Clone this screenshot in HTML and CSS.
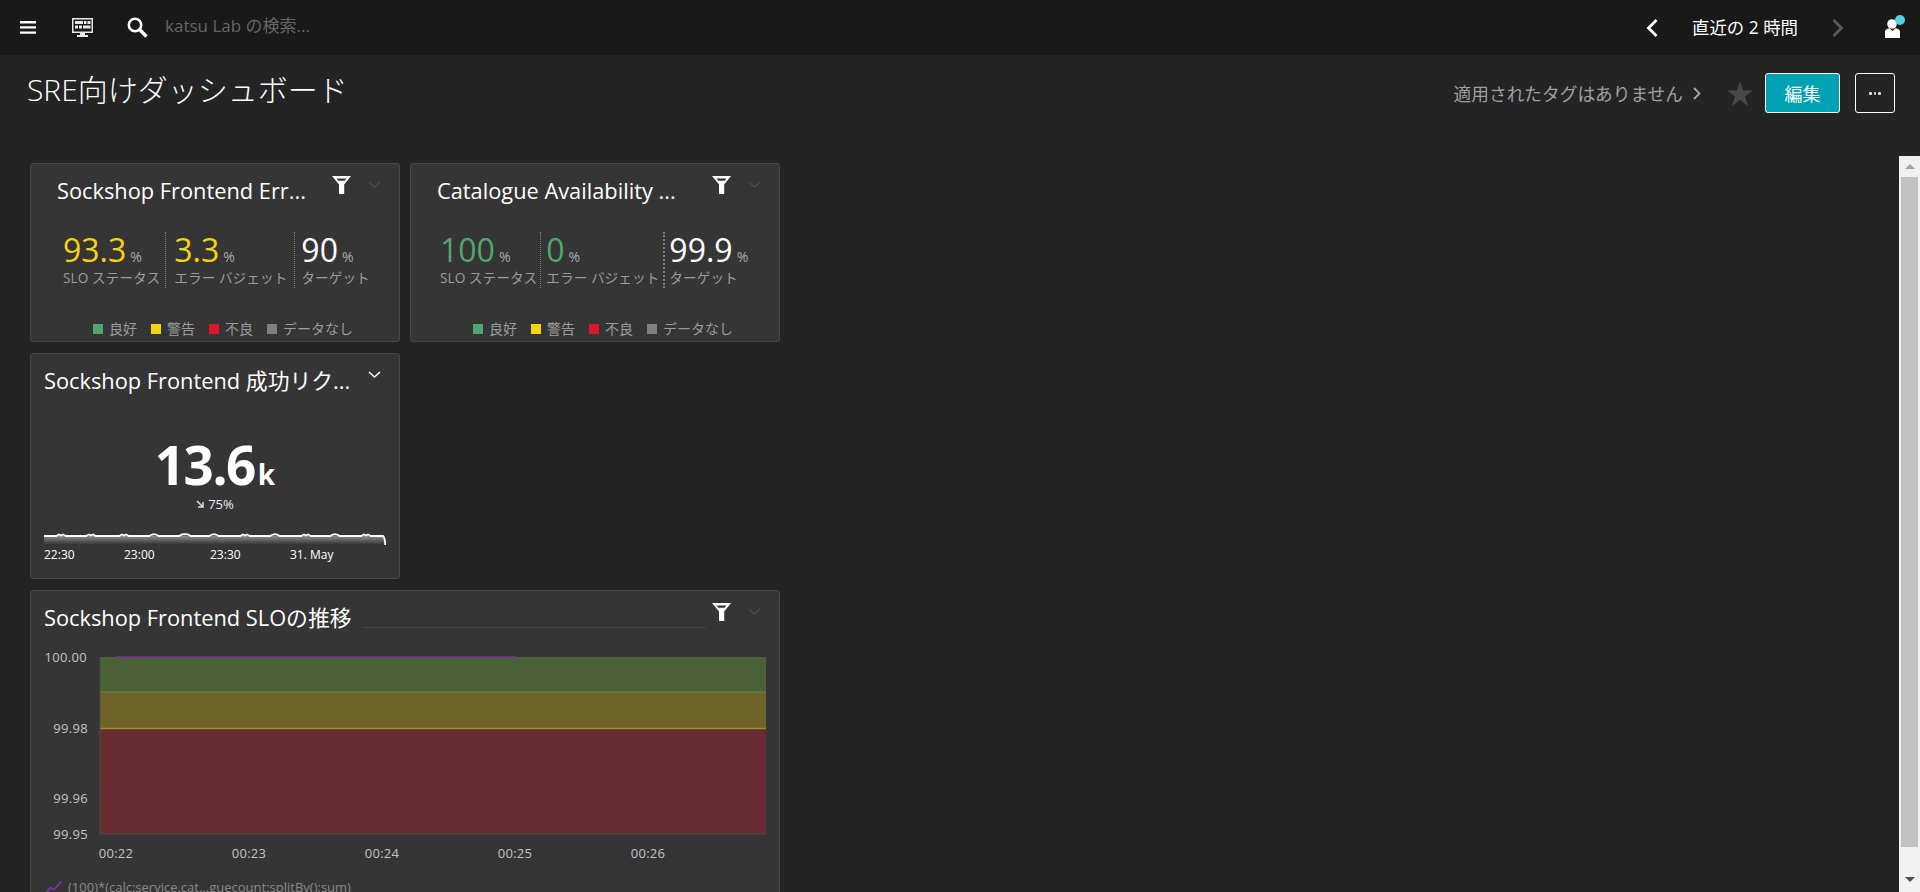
FILE: index.html
```html
<!DOCTYPE html>
<html lang="ja">
<head>
<meta charset="utf-8">
<title>SRE向けダッシュボード</title>
<link rel="stylesheet" href="styles.css">
</head>
<body>
<header class="topbar">
  <svg class="ico ico-menu" viewBox="0 0 16 13"><path d="M0 0h16v2.4H0zM0 5.2h16v2.4H0zM0 10.4h16v2.4H0z" fill="#fff"/></svg>
  <svg class="ico ico-board" viewBox="0 0 21 19"><path fill="#e8e8e8" fill-rule="evenodd" d="M0 0h21v15H13v2h3v2H5v-2h3v-2H0zM1.5 1.5v12h18v-12z"/><path fill="#e8e8e8" d="M3 3h8v3H3zM12 3h2.5v3H12zM15.500 3h3v3h-3zM3 7.500h3v3H3zM7 7.500h3v3H7zM11 7.500h7.500v3H11z"/></svg>
  <svg class="ico ico-search" viewBox="0 0 21 21"><circle cx="8" cy="8" r="6.200" fill="none" stroke="#fff" stroke-width="2.600"/><path d="M12.500 12.500l7 7" stroke="#fff" stroke-width="3.400" fill="none"/></svg>
  <span class="search-text">katsu Lab の検索...</span>
  <div class="timeframe">
    <svg class="ico ico-prev" viewBox="0 0 12 18"><path d="M10.500 1L2.500 9l8 8" fill="none" stroke="#fff" stroke-width="2.800"/></svg>
    <span class="time-label">直近の 2 時間</span>
    <svg class="ico ico-next" viewBox="0 0 12 18"><path d="M1.500 1l8 8-8 8" fill="none" stroke="#5c5c5c" stroke-width="2.800"/></svg>
  </div>
  <div class="user">
    <svg class="ico ico-user" viewBox="0 0 20 23"><circle cx="7" cy="9" r="4.800" fill="#fff"/><path fill="#fff" d="M0 16.500q0-2 2-2.500l2.500-.7L7.500 16l3-2.700 2.500.7q2 .5 2 2.500V23H0z"/><circle cx="15" cy="5" r="5" fill="#4fd3e0"/></svg>
  </div>
</header>

<section class="titlebar">
  <h1 class="page-title">SRE向けダッシュボード</h1>
  <div class="title-actions">
    <span class="tags-text">適用されたタグはありません</span>
    <svg class="ico ico-tagnext" viewBox="0 0 8 13"><path d="M1 1l5.500 5.500L1 12" fill="none" stroke="#a8a8a8" stroke-width="1.800"/></svg>
    <svg class="ico ico-star" viewBox="0 0 26 25"><path fill="#484848" d="M13 0l3.100 9.500H26l-8 5.900 3 9.600-8-5.900L5 25l3-9.600-8-5.900h9.900z"/></svg>
    <button class="btn btn-primary">編集</button>
    <button class="btn btn-more"><span class="dots"><i></i><i></i><i></i></span></button>
  </div>
</section>

<div class="workspace">
  <main class="dashboard">
    <article class="tile tile-slo">
      <div class="tile-head head-indent">
        <h2 class="tile-title">Sockshop Frontend Err...</h2>
        <svg class="ico ico-filter" viewBox="0 0 19 18"><path fill="#fff" fill-rule="evenodd" d="M0 0h19l-6.800 8.500V18H7V8.500zM4.500 2.500l1.800 2.300h6.400l1.800-2.300z"/></svg>
        <svg class="ico ico-chev" viewBox="0 0 13 7"><path d="M1 1l5.500 5L12 1" fill="none" stroke="#4c4c4c" stroke-width="1.500"/></svg>
      </div>
      <div class="stats stats-a">
        <div class="stat"><div class="val warn">93.3<small>%</small></div><div class="lbl">SLO ステータス</div></div>
        <div class="stat"><div class="val warn">3.3<small>%</small></div><div class="lbl">エラー バジェット</div></div>
        <div class="stat"><div class="val">90<small>%</small></div><div class="lbl">ターゲット</div></div>
      </div>
      <ul class="legend">
        <li><i class="sw sw-good"></i>良好</li>
        <li><i class="sw sw-warn"></i>警告</li>
        <li><i class="sw sw-bad"></i>不良</li>
        <li><i class="sw sw-none"></i>データなし</li>
      </ul>
    </article>

    <article class="tile tile-slo">
      <div class="tile-head head-indent">
        <h2 class="tile-title">Catalogue Availability ...</h2>
        <svg class="ico ico-filter" viewBox="0 0 19 18"><path fill="#fff" fill-rule="evenodd" d="M0 0h19l-6.800 8.500V18H7V8.500zM4.500 2.500l1.800 2.300h6.400l1.800-2.300z"/></svg>
        <svg class="ico ico-chev" viewBox="0 0 13 7"><path d="M1 1l5.500 5L12 1" fill="none" stroke="#4c4c4c" stroke-width="1.500"/></svg>
      </div>
      <div class="stats stats-b">
        <div class="stat"><div class="val good">100<small>%</small></div><div class="lbl">SLO ステータス</div></div>
        <div class="stat"><div class="val good">0<small>%</small></div><div class="lbl">エラー バジェット</div></div>
        <div class="stat"><div class="val">99.9<small>%</small></div><div class="lbl">ターゲット</div></div>
      </div>
      <ul class="legend">
        <li><i class="sw sw-good"></i>良好</li>
        <li><i class="sw sw-warn"></i>警告</li>
        <li><i class="sw sw-bad"></i>不良</li>
        <li><i class="sw sw-none"></i>データなし</li>
      </ul>
    </article>

    <article class="tile tile-single">
      <div class="tile-head">
        <h2 class="tile-title">Sockshop Frontend 成功リク...</h2>
        <svg class="ico ico-chev" viewBox="0 0 13 7"><path d="M1 1l5.500 5L12 1" fill="none" stroke="#fff" stroke-width="1.500"/></svg>
      </div>
      <div class="big">13.6<span class="big-unit">k</span></div>
      <div class="trend"><svg class="ico ico-trend" viewBox="0 0 8 8"><path d="M1 1l5.500 5.500M7 2v5H2" fill="none" stroke="#ddd" stroke-width="1.500"/></svg>75%</div>
      <svg class="spark" viewBox="0 0 342 13">
        <defs><linearGradient id="sparkfill" x1="0" y1="0" x2="0" y2="1"><stop offset="0" stop-color="#8a8a8a"/><stop offset="1" stop-color="#303030"/></linearGradient></defs>
        <path fill="url(#sparkfill)" d="M0 3H338L342 12V12H0z"/>
        <path fill="none" stroke="#fff" stroke-width="1.800" d="M0 3H12L15 1.500 17 2.500 19 1.500 22 3H42L45 1.500 47 2.500 49 1.500 52 3H75L78 1.500 80 2.500 82 1.500 85 3H105L108 1.500 110 1.200 112 1.500 115 3H135L138 1.500 141 1.200 144 1.500 147 3H165L168 1.500 170 1.200 172 1.500 175 3H196L199 1.500 201 2.500 203 1.500 206 3H226L229 1.500 231 1.200 233 1.500 236 3H257L260 1.500 262 2.500 264 1.500 267 3H286L289 1.500 291 1.200 293 1.500 296 3H317L320 1.500 322 2.500 324 1.500 327 3H339Q341 5 341.300 12"/>
      </svg>
      <div class="spark-axis"><span>22:30</span><span>23:00</span><span>23:30</span><span>31. May</span></div>
    </article>

    <article class="tile tile-chart">
      <div class="tile-head">
        <h2 class="tile-title">Sockshop Frontend SLOの推移</h2>
        <div class="head-rule"></div>
        <svg class="ico ico-filter" viewBox="0 0 19 18"><path fill="#fff" fill-rule="evenodd" d="M0 0h19l-6.800 8.500V18H7V8.500zM4.500 2.500l1.800 2.300h6.400l1.800-2.300z"/></svg>
        <svg class="ico ico-chev" viewBox="0 0 13 7"><path d="M1 1l5.500 5L12 1" fill="none" stroke="#4c4c4c" stroke-width="1.500"/></svg>
      </div>
      <svg class="chart" viewBox="31 640 748 236">
        <rect class="band-green" x="100" y="657" width="666" height="35"/>
        <rect class="band-yellow" x="100" y="692" width="666" height="36"/>
        <rect class="band-red" x="100" y="728" width="666" height="106"/>
        <path class="line-green" d="M100 692H766"/>
        <path class="line-orange" d="M100 728.500H766"/>
        <path class="line-axis" d="M100 657V834H766"/>
        <path class="line-purple" d="M115 657H517"/>
        <g class="ylabels">
          <text x="87" y="662">100.00</text>
          <text x="88" y="733">99.98</text>
          <text x="88" y="803">99.96</text>
          <text x="88" y="839">99.95</text>
        </g>
        <g class="xlabels">
          <text x="116" y="858">00:22</text>
          <text x="249" y="858">00:23</text>
          <text x="382" y="858">00:24</text>
          <text x="515" y="858">00:25</text>
          <text x="648" y="858">00:26</text>
        </g>
      </svg>
      <div class="chart-legend">
        <svg class="ico ico-series" viewBox="0 0 16 12"><path d="M0 11.500l5-5 3 2 7.500-8" fill="none" stroke="#7b35a8" stroke-width="1.600"/></svg>
        <span>(100)*(calc:service.cat...guecount:splitBy():sum)</span>
      </div>
    </article>
  </main>

  <div class="scrollbar">
    <span class="arrow arrow-up"></span>
    <span class="thumb"></span>
    <span class="arrow arrow-down"></span>
  </div>
</div>
</body>
</html>
```
FILE: styles.css
```css
* { box-sizing: border-box; }
html, body { height: 100%; }
body {
  margin: 0;
  height: 892px;
  overflow: hidden;
  display: flex;
  flex-direction: column;
  background: #242424;
  color: #fff;
  font-family: "Open Sans", "Noto Sans CJK JP", sans-serif;
}
.ico { display: block; flex: none; }

/* top bar */
.topbar {
  flex: none;
  height: 55px;
  background: #191919;
  display: flex;
  align-items: center;
  padding-left: 20px;
}
.ico-menu { width: 16px; height: 13px; margin-right: 36px; }
.ico-board { width: 21px; height: 19px; margin-right: 34px; }
.ico-search { width: 21px; height: 21px; margin-right: 17px; }
.search-text { font-size: 17px; line-height: 24px; color: #666; margin-bottom: 3px; }
.timeframe { margin-left: auto; display: flex; align-items: center; }
.ico-prev { width: 12px; height: 18px; margin-right: 34px; }
.time-label { font-size: 17.400px; line-height: 24px; width: 105px; white-space: nowrap; margin-bottom: 2px; }
.ico-next { width: 12px; height: 18px; margin-left: 35px; }
.user { margin-left: 41px; margin-right: 15px; margin-bottom: 3px; }
.ico-user { width: 20px; height: 23px; }

/* title row */
.titlebar {
  flex: none;
  height: 101px;
  display: flex;
  align-items: flex-start;
  justify-content: space-between;
  padding: 18px 25px 0 27px;
}
.page-title { margin: -2px 0 0; font-size: 30px; line-height: 38px; font-weight: 300; }
.title-actions { display: flex; align-items: center; height: 40px; }
.tags-text { font-size: 17.700px; color: #a0a0a0; white-space: nowrap; }
.ico-tagnext { width: 8px; height: 13px; margin-left: 10px; }
.ico-star { width: 26px; height: 25px; margin-left: 26px; margin-right: 12px; }
.btn {
  height: 40px;
  border: 1px solid #fff;
  border-radius: 3px;
  color: #fff;
  font: inherit;
  font-size: 18px;
  padding: 0;
}
.btn-primary { width: 75px; background: #00a1b2; }
.btn-more { width: 40px; margin-left: 15px; background: transparent; }
.dots { display: flex; justify-content: center; gap: 2px; }
.dots i { width: 2.500px; height: 3px; background: #ddd; border-radius: 1px; }

/* dashboard */
.workspace { flex: 1; display: flex; min-height: 0; }
.dashboard {
  flex: 1;
  min-width: 0;
  overflow: hidden;
  padding: 7px 0 0 30px;
  display: grid;
  grid-template-columns: 370px 370px;
  grid-template-rows: 179px 226px 400px;
  gap: 11px 10px;
  align-content: start;
}
.tile {
  background: #353535;
  border: 1px solid #474747;
  border-radius: 3px;
  display: flex;
  flex-direction: column;
}
.tile-chart { grid-column: 1 / span 2; }
.tile-head {
  display: flex;
  align-items: flex-start;
  padding: 12px 18px 0 13px;
  height: 40px;
  flex: none;
}
.head-indent { padding-left: 26px; }
.tile-title {
  margin: 1px 0 0;
  font-size: 21.800px;
  line-height: 28px;
  font-weight: 400;
  white-space: nowrap;
  flex: 1;
}
.ico-filter { width: 19px; height: 18px; margin-right: 17px; }
.ico-chev { width: 13px; height: 7px; margin-top: 5px; }

/* SLO tiles */
.stats { display: flex; margin-top: 28px; flex: none; }
.stat { height: 56px; border-right: 1px dotted #808080; white-space: nowrap; }
.stat:last-child { border-right: 0; }
.val { font-size: 32px; line-height: 36px; }
.val small { font-size: 14px; line-height: 1; color: #aaa; margin-left: 4px; }
.lbl { font-size: 13.700px; line-height: 20px; color: #9c9c9c; }
.warn { color: #f5d30f; }
.good { color: #4fa76f; }
.stats-a { padding-left: 32px; }
.stats-a .stat:nth-child(1) { padding-right: 5px; }
.stats-a .stat:nth-child(2) { padding: 0 7px 0 8px; }
.stats-a .stat:nth-child(3) { padding-left: 6px; }
.stats-b { padding-left: 29px; }
.stats-b .stat:nth-child(1) { padding-right: 3px; }
.stats-b .stat:nth-child(2) { padding: 0 4px 0 5px; border-right: 2px dotted #808080; }
.stats-b .stat:nth-child(3) { padding-left: 4px; }
.legend {
  list-style: none;
  margin: auto 0 2px;
  padding: 0 0 0 16px;
  display: flex;
  justify-content: center;
  gap: 14px;
  font-size: 14px;
  line-height: 20px;
  color: #9c9c9c;
}
.legend li { display: flex; align-items: center; gap: 6px; }
.sw { width: 10px; height: 10px; display: block; }
.sw-good { background: #4fa76f; }
.sw-warn { background: #f5d30f; }
.sw-bad { background: #dc172a; }
.sw-none { background: #808080; }

/* single value tile */
.big {
  margin-top: 41px;
  text-align: center;
  font-size: 53px;
  line-height: 60px;
  font-weight: 700;
  letter-spacing: -1.500px;
  height: 60px;
}
.big-unit { font-size: 28px; margin-left: 3px; letter-spacing: 0; }
.trend {
  display: flex;
  justify-content: center;
  align-items: center;
  gap: 4px;
  font-size: 13px;
  line-height: 18px;
  color: #eee;
}
.ico-trend { width: 8px; height: 8px; }
.spark { display: block; width: 342px; height: 13px; margin: 20px 0 0 13px; }
.spark-axis {
  display: grid;
  grid-template-columns: 80px 86px 80px auto;
  margin: 0 0 0 13px;
  font-size: 12px;
  line-height: 18px;
  font-weight: 500;
}

/* chart tile */
.head-rule { flex: 1; height: 25px; border-bottom: 1px solid #474747; margin: 0 6px 0 11px; }
.tile-chart .tile-title { flex: none; }
.chart { display: block; width: 748px; height: 236px; margin-top: 9px; flex: none; }
.band-green { fill: #4b6137; }
.band-yellow { fill: #6e642a; }
.band-red { fill: #662c31; }
.line-green { stroke: #5c8a3e; fill: none; stroke-width: 1; }
.line-orange { stroke: #a88a2a; fill: none; stroke-width: 1.500; }
.line-axis { stroke: #4a4a4a; fill: none; stroke-width: 1; }
.line-purple { stroke: #7b2fa5; fill: none; stroke-width: 1.500; }
.ylabels text, .xlabels text { font-size: 13px; fill: #c4c4c4; letter-spacing: .3px; }
.ylabels text { text-anchor: end; }
.xlabels text { text-anchor: middle; }
.chart-legend {
  display: flex;
  align-items: center;
  gap: 6px;
  margin: 2px 0 0 15px;
  font-size: 13px;
  line-height: 18px;
  color: #8a8a8a;
  white-space: nowrap;
}
.ico-series { width: 16px; height: 12px; }

/* scrollbar */
.scrollbar {
  flex: none;
  width: 21px;
  background: #f1f1f1;
  display: flex;
  flex-direction: column;
  align-items: center;
  padding: 0 2px;
}
.arrow { width: 0; height: 0; border-left: 5px solid transparent; border-right: 5px solid transparent; flex: none; }
.arrow-up { border-bottom: 5px solid #a3a3a3; margin: 8px 0 8px; }
.arrow-down { border-top: 5px solid #505050; margin: 30px 0 7px; }
.thumb { width: 100%; height: 670px; background: #c1c1c1; flex: none; }
```
